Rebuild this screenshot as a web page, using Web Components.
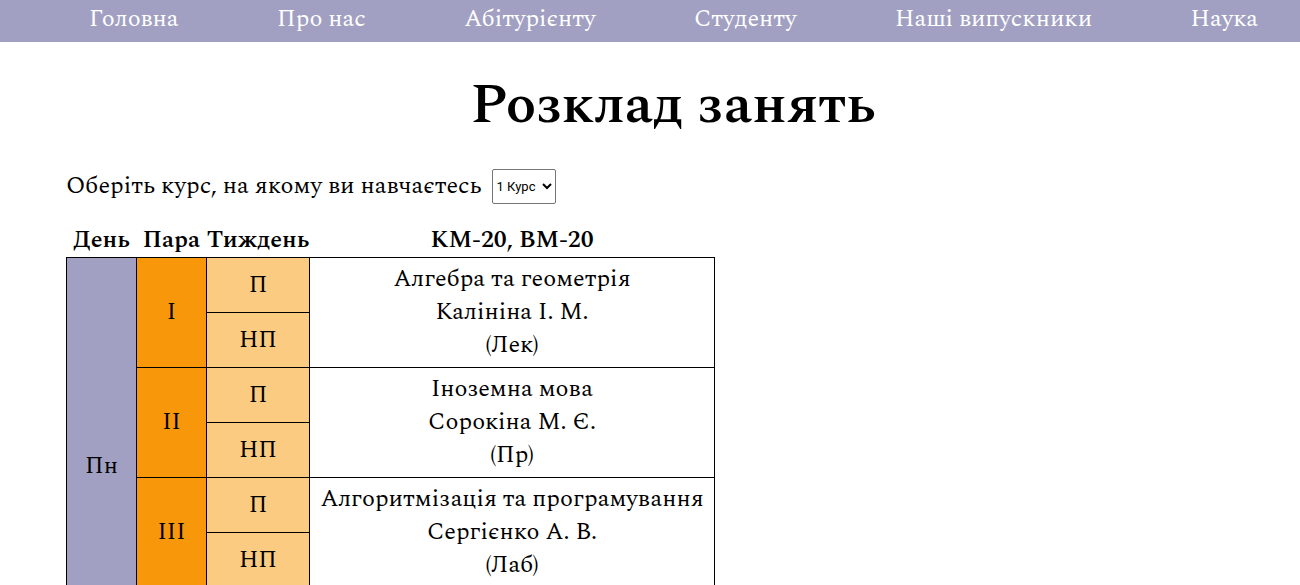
<!DOCTYPE html>
<html lang="uk">
<head>
<meta charset="utf-8">
<meta name="viewport" content="width=device-width, initial-scale=1">
<title>Розклад занять</title>
<style>
body { margin: 0; background: #fff; color: #000; font: 24px/33px Spectral, "Liberation Serif", serif; }
main { padding: 32px 20px 0 66px; }
</style>
</head>
<body>
<site-nav>
  <nav-link href="#home">Головна</nav-link>
  <nav-link href="#about">Про нас</nav-link>
  <nav-link href="#applicant">Абітурієнту</nav-link>
  <nav-link href="#student">Студенту</nav-link>
  <nav-link href="#alumni">Наші випускники</nav-link>
  <nav-link href="#science">Наука</nav-link>
</site-nav>
<main>
  <page-title>Розклад занять</page-title>
  <course-picker>Оберіть курс, на якому ви навчаєтесь</course-picker>
  <class-schedule></class-schedule>
</main>
<script>
const define = (name, html, setup) => customElements.define(name, class extends HTMLElement {
  constructor() {
    super();
    this.attachShadow({ mode: 'open' }).innerHTML = html;
  }
  connectedCallback() { if (setup) setup(this, this.shadowRoot); }
});

define('site-nav', `
<style>
:host { display: block; background: #a1a0c2; color: #fff; }
nav { display: flex; justify-content: space-between; padding: 3px 42px 6px 89px; }
</style>
<nav><slot></slot></nav>`);

define('nav-link', `
<style>
:host { display: block; white-space: nowrap; }
a { color: inherit; text-decoration: none; }
</style>
<a><slot></slot></a>`, (el, root) => {
  root.querySelector('a').href = el.getAttribute('href');
});

define('page-title', `
<style>
:host { display: block; }
h1 { margin: 0; font-size: 56px; line-height: 64px; font-weight: 600; text-align: center; }
</style>
<h1><slot></slot></h1>`);

define('course-picker', `
<style>
:host { display: flex; align-items: center; gap: 10px; margin-top: 31px; }
select { box-sizing: border-box; width: 64px; height: 35px; margin: 0; font: 13px Roboto, Arial, sans-serif; color: #000; background: #fff; border: 1px solid #767676; border-radius: 2px; }
</style>
<label for="course"><slot></slot></label>
<select id="course"><option>1 Курс</option><option>2 Курс</option><option>3 Курс</option><option>4 Курс</option></select>`);

define('class-schedule', `
<style>
:host { display: block; margin-top: 19px; }
table { border-collapse: collapse; table-layout: fixed; width: 649px; text-align: center; }
.narrow { width: 70px; }
.week { width: 103px; }
th { padding: 0; height: 34px; font-weight: 600; white-space: nowrap; }
td { border: 1px solid #000; padding: 5px 0; }
.day { background: #a1a0c2; }
.pair { background: #f8970a; }
.half { background: #fbcb82; height: 33px; }
</style>
<table>
  <colgroup><col class="narrow"><col class="narrow"><col class="week"><col></colgroup>
  <thead><tr><th>День</th><th>Пара</th><th>Тиждень</th><th>КМ-20, ВМ-20</th></tr></thead>
  <tbody></tbody>
</table>`, (el, root) => {
  // The last slot of the day is free.
  const pairs = [
    ['I', 'Алгебра та геометрія<br>Калініна І. М.<br>(Лек)'],
    ['II', 'Іноземна мова<br>Сорокіна М. Є.<br>(Пр)'],
    ['III', 'Алгоритмізація та програмування<br>Сергієнко А. В.<br>(Лаб)'],
    ['', '']
  ];
  root.querySelector('tbody').innerHTML = pairs.map(([n, lesson], i) => `
    <tr>${i ? '' : `<td class="day" rowspan="${pairs.length * 2}">Пн</td>`}
      <td class="pair" rowspan="2">${n}</td><td class="half">${n && 'П'}</td><td rowspan="2">${lesson}</td></tr>
    <tr><td class="half">${n && 'НП'}</td></tr>`).join('');
});
</script>
</body>
</html>
